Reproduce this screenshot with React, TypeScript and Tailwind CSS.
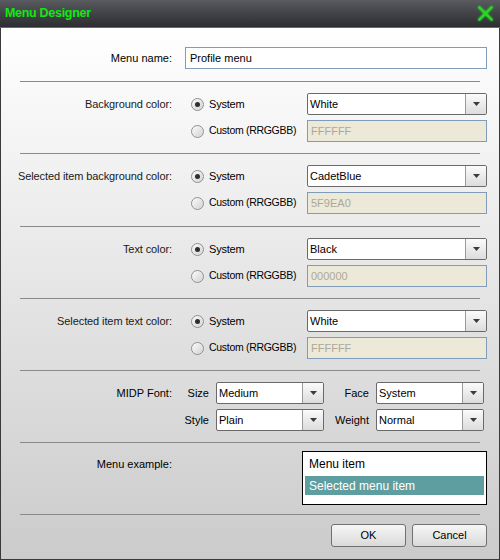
import React from "react";

const Radio = ({ checked }: { checked?: boolean }) => (
  <span className="flex h-[13px] w-[13px] shrink-0 items-center justify-center rounded-full border border-[#8f8f8f] bg-linear-to-br from-[#fbfbfb] to-[#d2d2d2] shadow-[inset_0_0_1px_#fff]">
    {checked && <span className="h-[5px] w-[5px] rounded-full bg-[#2e2e2e]" />}
  </span>
);

const Dropdown = ({ value, className = "" }: { value: string; className?: string }) => (
  <div className={`flex h-[22px] overflow-hidden rounded-[2px] border border-[#6a6a6a] bg-white ${className}`}>
    <div className="flex flex-1 items-center pl-[2px] text-[11px] text-black">{value}</div>
    <div className="flex w-[21px] items-center justify-center border-l border-[#9a9a9a] bg-linear-to-b from-[#fbfbfb] to-[#dcdcdc]">
      <svg width="7" height="4" viewBox="0 0 7 4">
        <path d="M0 0h7L3.5 4z" fill="#3a3a3a" />
      </svg>
    </div>
  </div>
);

const Separator = () => <div className="ml-[19px] h-px w-[460px] bg-[#8a8a8a]" />;

const ColorSection = ({
  label,
  value,
  hex,
  extra = false,
}: {
  label: string;
  value: string;
  hex: string;
  extra?: boolean;
}) => (
  <div className={`flex pt-[11px] ${extra ? "pb-[12px]" : "pb-[11px]"}`}>
    <div className="flex h-[22px] w-[171px] items-center justify-end text-[11px] tracking-[-0.1px] text-[#1a1a1a]">
      {label}
    </div>
    <div className="ml-[19px] grid grid-cols-[116px_180px] gap-y-[5px]">
      <div className="flex h-[22px] items-center gap-[5px] text-[11px] tracking-[-0.2px]">
        <Radio checked />
        <span>System</span>
      </div>
      <Dropdown value={value} />
      <div className="flex h-[22px] items-center gap-[5px] text-[10.5px] tracking-[-0.3px]">
        <Radio />
        <span>Custom (RRGGBB)</span>
      </div>
      <div className="flex h-[22px] items-center border border-[#7f9db9] bg-[#ece9d8] pl-[3px] text-[11px] text-[#aca899]">
        {hex}
      </div>
    </div>
  </div>
);

const FontLabel = ({ children }: { children: string }) => (
  <div className="flex h-[22px] items-center justify-end pr-[7px] text-[11px]">{children}</div>
);

export default function App() {
  return (
    <div className="flex h-[560px] w-[500px] flex-col font-['Liberation_Sans',Arial,sans-serif] text-black">
      {/* title bar */}
      <div className="flex h-[28px] shrink-0 items-center justify-between border-b border-[#6b6b6b] bg-linear-to-b from-[#5a5b60] via-[#424347] to-[#2d2e31] pr-[7px] pl-[5px]">
        <span className="text-[12.5px] font-bold tracking-[-0.3px] text-[#12e812]">Menu Designer</span>
        <svg width="15" height="15" viewBox="0 0 15 15" className="drop-shadow-[0_0_1px_#0f0]">
          <path d="M1.5 1.5l12 12M13.5 1.5l-12 12" stroke="#2ed32e" strokeWidth="2.4" strokeLinecap="square" />
        </svg>
      </div>

      {/* body */}
      <div className="flex flex-1 flex-col border-x border-b border-[#3a3a3a] bg-linear-to-b from-[#ffffff] to-[#cbcbcb]">
        <div className="flex pt-[19px] pb-[12px]">
          <div className="flex h-[22px] w-[171px] items-center justify-end text-[11px]">Menu name:</div>
          <div className="ml-[13px] flex h-[22px] w-[302px] items-center border border-[#7f9db9] bg-white pl-[4px] text-[11px]">
            Profile menu
          </div>
        </div>
        <Separator />
        <ColorSection label="Background color:" value="White" hex="FFFFFF" />
        <Separator />
        <ColorSection label="Selected item background color:" value="CadetBlue" hex="5F9EA0" extra />
        <Separator />
        <ColorSection label="Text color:" value="Black" hex="000000" />
        <Separator />
        <ColorSection label="Selected item text color:" value="White" hex="FFFFFF" />
        <Separator />

        <div className="flex pt-[11px] pb-[11px]">
          <div className="flex h-[22px] w-[171px] items-center justify-end text-[11px]">MIDP Font:</div>
          <div className="grid grid-cols-[44px_108px_52px_108px] gap-y-[5px]">
            <FontLabel>Size</FontLabel>
            <Dropdown value="Medium" />
            <FontLabel>Face</FontLabel>
            <Dropdown value="System" />
            <FontLabel>Style</FontLabel>
            <Dropdown value="Plain" />
            <FontLabel>Weight</FontLabel>
            <Dropdown value="Normal" />
          </div>
        </div>
        <Separator />

        <div className="flex pt-[8px] pb-[9px]">
          <div className="mt-[1px] flex h-[24px] w-[171px] items-center justify-end text-[11px]">Menu example:</div>
          <div className="ml-[130px] flex h-[54px] w-[185px] flex-col border border-black bg-white px-[2px]">
            <div className="flex h-[24px] items-center pl-[4px] text-[12px]">Menu item</div>
            <div className="flex h-[19px] items-center bg-[#5f9ea0] pl-[4px] text-[12px] text-white">
              Selected menu item
            </div>
          </div>
        </div>
        <Separator />

        <div className="flex justify-end gap-[6px] pt-[9px] pr-[12px]">
          <button className="h-[23px] w-[75px] rounded-[3px] border border-[#707070] bg-linear-to-b from-[#f6f6f6] to-[#dadada] text-[11px]">
            OK
          </button>
          <button className="h-[23px] w-[75px] rounded-[3px] border border-[#707070] bg-linear-to-b from-[#f6f6f6] to-[#dadada] text-[11px]">
            Cancel
          </button>
        </div>
      </div>
    </div>
  );
}
